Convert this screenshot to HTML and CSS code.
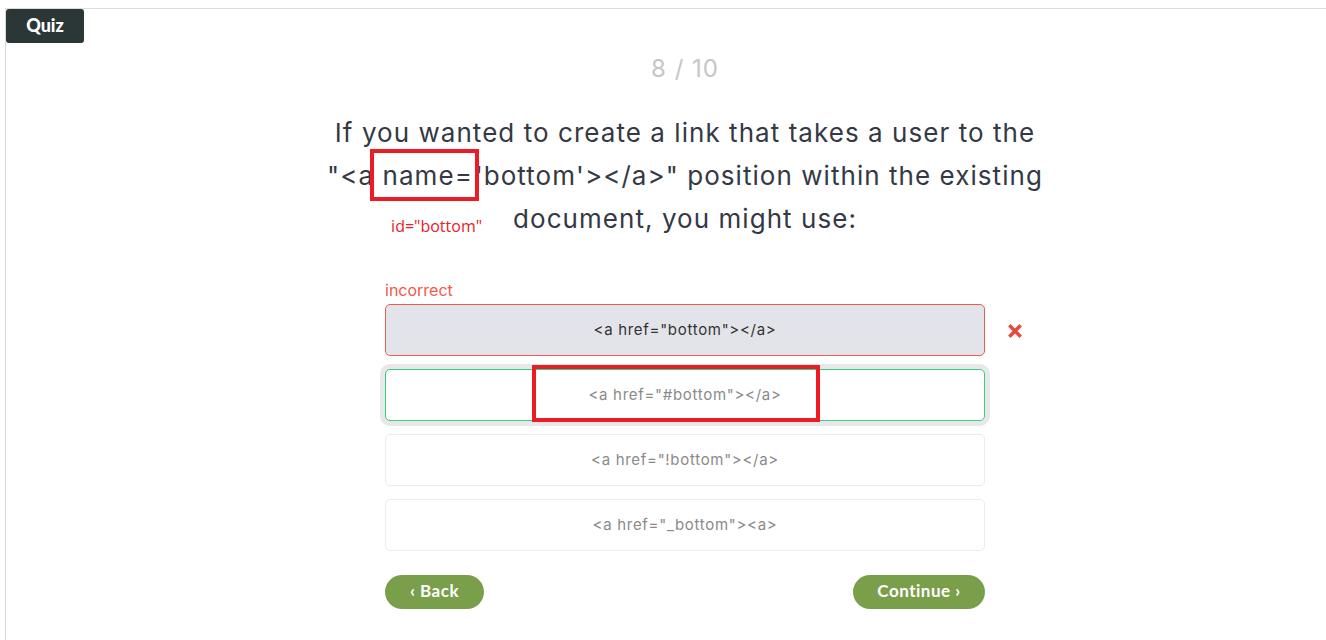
FILE: index.html
```html
<!DOCTYPE html>
<html lang="en">
<head>
<meta charset="utf-8">
<title>Quiz</title>
<link rel="stylesheet" href="styles.css">
</head>
<body>
<div class="panel">
  <div class="tag">Quiz</div>
  <div class="content">
    <div class="counter">8 / 10</div>
    <div class="question">
      If you wanted to create a link that takes a user to the<br>
      "&lt;a<span class="mark"> name=</span>'bottom'&gt;&lt;/a&gt;" position within the existing<br>
      document, you might use:
      <span class="note">id="bottom"</span>
    </div>
    <div class="status">incorrect</div>
    <div class="answers">
      <div class="answer wrong">&lt;a href="bottom"&gt;&lt;/a&gt;
        <svg class="xicon" width="14" height="14" viewBox="0 0 14 14"><path d="M2.5 2.5 L11.5 11.5 M11.5 2.5 L2.5 11.5" stroke="#e8493b" stroke-width="3.4" stroke-linecap="square"/></svg>
      </div>
      <div class="answer right">&lt;a href="#bottom"&gt;&lt;/a&gt;<span class="box"></span></div>
      <div class="answer">&lt;a href="!bottom"&gt;&lt;/a&gt;</div>
      <div class="answer">&lt;a href="_bottom"&gt;&lt;a&gt;</div>
    </div>
    <div class="nav">
      <button class="btn back">&lsaquo; Back</button>
      <button class="btn cont">Continue &rsaquo;</button>
    </div>
  </div>
</div>
</body>
</html>
```

FILE: styles.css
```css
html, body {
  margin: 0;
  padding: 0;
  background: #fff;
  overflow: hidden;
  height: 640px;
}
body {
  font-family: "Inter", "Lato", sans-serif;
}
.panel {
  position: relative;
  margin: 8px 0 0 5px;
  width: 1358px;
  height: 640px;
  border-top: 1px solid #dcdcdc;
  border-left: 1px solid #d8d8d8;
}
.tag {
  position: absolute;
  left: 0;
  top: 0;
  width: 78px;
  height: 34px;
  background: #2b3736;
  color: #fff;
  border-radius: 3px;
  font-family: "Lato", sans-serif;
  font-weight: 900;
  font-size: 18px;
  line-height: 33px;
  text-align: center;
}
.content {
  display: flex;
  flex-direction: column;
  align-items: center;
  padding-top: 45px;
}
.counter {
  font-size: 24px;
  line-height: 30px;
  color: #c6c6c6;
  font-weight: 400;
  letter-spacing: 1px;
}
.question {
  position: relative;
  margin-top: 27px;
  text-align: center;
  font-size: 26px;
  line-height: 43px;
  color: #343945;
  letter-spacing: 1.05px;
}
.mark {
  outline: 4px solid #ed1c24;
  outline-offset: 0;
  padding: 7px 2px 6px 0;
}
.note {
  position: absolute;
  left: 64px;
  top: 105px;
  font-family: "Open Sans", sans-serif;
  font-size: 16px;
  line-height: 20px;
  color: #e8202a;
  letter-spacing: 0;
}
.status {
  width: 600px;
  margin-top: 40px;
  font-size: 16px;
  line-height: 20px;
  color: #ee5a4c;
}
.answers {
  width: 600px;
  margin-top: 4px;
  display: flex;
  flex-direction: column;
  gap: 13px;
}
.answer {
  position: relative;
  box-sizing: border-box;
  height: 52px;
  border: 1px solid #ececec;
  border-radius: 5px;
  background: #fff;
  display: flex;
  align-items: center;
  justify-content: center;
  padding-bottom: 2px;
  font-size: 15px;
  color: #8a8a8a;
  letter-spacing: 0.7px;
}
.answer.wrong {
  background: #e3e4e9;
  border-color: #ef5b50;
  color: #333;
}
.answer.right {
  border-color: #3ccb80;
  box-shadow: 0 0 0 5px #e8e8e8;
}
.xicon {
  position: absolute;
  right: -38px;
  top: 19px;
}
.box {
  position: absolute;
  left: 146px;
  top: -5px;
  width: 288px;
  height: 57px;
  box-sizing: border-box;
  border: 4px solid #ed1c24;
}
.nav {
  width: 600px;
  margin-top: 24px;
  display: flex;
  justify-content: space-between;
}
.btn {
  height: 34px;
  border: none;
  border-radius: 17px;
  background: #7a9f4b;
  color: #fff;
  font-family: "Lato", sans-serif;
  font-weight: 700;
  font-size: 17px;
  letter-spacing: 0.5px;
  padding: 0 0 3px 0;
}
.back { width: 99px; }
.cont { width: 132px; }
```
